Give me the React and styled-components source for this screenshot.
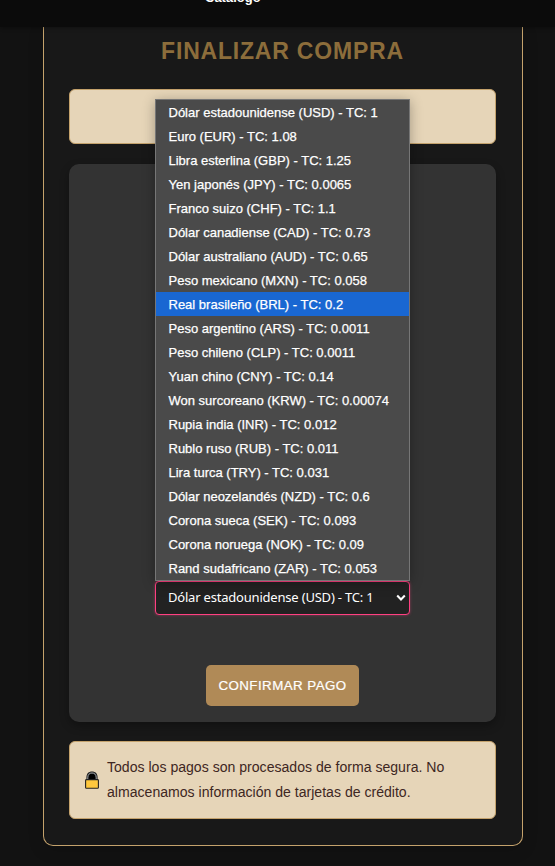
import React from "react";
import styled, { createGlobalStyle } from "styled-components";

const GlobalStyle = createGlobalStyle`
  * { box-sizing: border-box; }
  html, body { margin: 0; background: #121212; overflow: hidden; }
  body { font-family: "Liberation Sans", Arial, sans-serif; }
`;

const Page = styled.div`
  height: 866px;
  background: #121212;
  overflow: hidden;
`;

const TopBar = styled.header`
  position: relative;
  z-index: 1;
  display: flex;
  align-items: flex-end;
  height: 27px;
  padding-left: 205px;
  background: #0b0b0b;
  box-shadow: 0 1px 4px rgba(0, 0, 0, 0.3);
`;

const NavLink = styled.a`
  color: #fff;
  font-size: 13px;
  font-weight: 700;
  line-height: 16px;
  margin-bottom: 21px;
`;

const Checkout = styled.main`
  display: flex;
  flex-direction: column;
  width: 480px;
  height: 819px;
  margin-left: 43px;
  padding: 0 26px 0 25px;
  background: #181818;
  border: 1px solid #c4a26c;
  border-top: 0;
  border-radius: 0 0 10px 10px;
  box-shadow: 0 4px 16px rgba(0, 0, 0, 0.15);
`;

const Title = styled.h1`
  height: 62px;
  margin: 0;
  padding-top: 9px;
  color: #8c6d3b;
  font-size: 23px;
  line-height: 30px;
  letter-spacing: 0.8px;
  text-align: center;
`;

const Notice = styled.section`
  display: flex;
  align-items: center;
  gap: 8px;
  flex: none;
  width: 427px;
  height: ${(p) => p.$height}px;
  padding: 0 15px;
  background: #e6d5b8;
  border: 1px solid #c4a26c;
  border-radius: 6px;
  color: #3e2723;
`;

const NoticeText = styled.p`
  margin: 0;
  font-size: 14.08px;
  line-height: 25px;
`;

const Panel = styled.section`
  display: flex;
  flex-direction: column;
  align-items: center;
  width: 427px;
  height: 558px;
  margin: 20px 0 19px;
  padding-top: 417px;
  background: #333;
  border-radius: 10px;
  box-shadow: 0 4px 10px rgba(0, 0, 0, 0.3);
`;

const SelectField = styled.div`
  position: relative;
  width: 255px;
  height: 34px;
`;

const SelectBox = styled.div`
  display: flex;
  align-items: center;
  justify-content: space-between;
  height: 34px;
  padding: 0 2px 2px 12px;
  background: #222;
  border: 1px solid #ff4081;
  border-radius: 4px;
  box-shadow: 0 0 3px rgba(255, 64, 129, 0.45);
  color: #fff;
  font-family: "Noto Sans", sans-serif;
  font-size: 13px;
  white-space: nowrap;
`;

const SelectValue = styled.span`
  letter-spacing: -0.2px;
`;

const OptionList = styled.ul`
  position: absolute;
  left: 0;
  bottom: 34px;
  width: 255px;
  height: 482px;
  margin: 0;
  padding: 0;
  list-style: none;
  background: #4a4a4a;
  border: 1px solid #767676;
  box-shadow: 0 2px 12px rgba(0, 0, 0, 0.3);
`;

const Option = styled.li`
  height: 24px;
  padding-left: 12.5px;
  background: ${(p) => (p.$active ? "#1967d2" : "transparent")};
  color: #fff;
  font-size: 13px;
  line-height: 26px;
  white-space: nowrap;
  -webkit-text-stroke: 0.25px #fff;
`;

const ConfirmButton = styled.button`
  width: 153px;
  height: 41px;
  margin-top: 50px;
  padding: 0;
  background: #b08a57;
  border: 0;
  border-radius: 5px;
  color: #fff;
  font-family: inherit;
  font-size: 13.333px;
  line-height: 41px;
  letter-spacing: 0.45px;
  white-space: nowrap;
  -webkit-text-stroke: 0.2px #fff;
`;

const Chevron = () => (
  <svg width="12" height="12" viewBox="0 0 12 12" fill="none">
    <path d="M2.2 4.6 6 8.4 9.8 4.6" stroke="#fff" strokeWidth="2.1" />
  </svg>
);

const Lock = () => (
  <svg width="14" height="18" viewBox="0 0 14 18">
    <path d="M1.4 8.5V6.6C1.4 2.6 3.6.6 7 .6s5.6 2 5.6 6v1.9" fill="#222" />
    <path d="M2.8 8.5V6.8C2.8 3.6 4.4 2 7 2s4.2 1.6 4.2 4.8v1.7" fill="#000" stroke="#a9adb0" strokeWidth="1" />
    <rect x=".6" y="8.6" width="12.8" height="8.6" rx=".8" fill="#ffc83d" stroke="#222" strokeWidth="1.1" />
  </svg>
);

const currencies = [
  ["Dólar estadounidense", "USD", "1"],
  ["Euro", "EUR", "1.08"],
  ["Libra esterlina", "GBP", "1.25"],
  ["Yen japonés", "JPY", "0.0065"],
  ["Franco suizo", "CHF", "1.1"],
  ["Dólar canadiense", "CAD", "0.73"],
  ["Dólar australiano", "AUD", "0.65"],
  ["Peso mexicano", "MXN", "0.058"],
  ["Real brasileño", "BRL", "0.2"],
  ["Peso argentino", "ARS", "0.0011"],
  ["Peso chileno", "CLP", "0.0011"],
  ["Yuan chino", "CNY", "0.14"],
  ["Won surcoreano", "KRW", "0.00074"],
  ["Rupia india", "INR", "0.012"],
  ["Rublo ruso", "RUB", "0.011"],
  ["Lira turca", "TRY", "0.031"],
  ["Dólar neozelandés", "NZD", "0.6"],
  ["Corona sueca", "SEK", "0.093"],
  ["Corona noruega", "NOK", "0.09"],
  ["Rand sudafricano", "ZAR", "0.053"],
];

const label = ([name, code, rate]) => `${name} (${code}) - TC: ${rate}`;

export default function App() {
  return (
    <>
      <GlobalStyle />
      <Page>
        <TopBar>
          <NavLink>Catálogo</NavLink>
        </TopBar>
        <Checkout>
          <Title>FINALIZAR COMPRA</Title>
          <Notice $height={55} />
          <Panel>
            <SelectField>
              <SelectBox>
                <SelectValue>{label(currencies[0])}</SelectValue>
                <Chevron />
              </SelectBox>
              <OptionList>
                {currencies.map((c) => (
                  <Option key={c[1]} $active={c[1] === "BRL"}>
                    {label(c)}
                  </Option>
                ))}
              </OptionList>
            </SelectField>
            <ConfirmButton>CONFIRMAR PAGO</ConfirmButton>
          </Panel>
          <Notice $height={78}>
            <Lock />
            <NoticeText>
              Todos los pagos son procesados de forma segura. No
              <br />
              almacenamos información de tarjetas de crédito.
            </NoticeText>
          </Notice>
        </Checkout>
      </Page>
    </>
  );
}
